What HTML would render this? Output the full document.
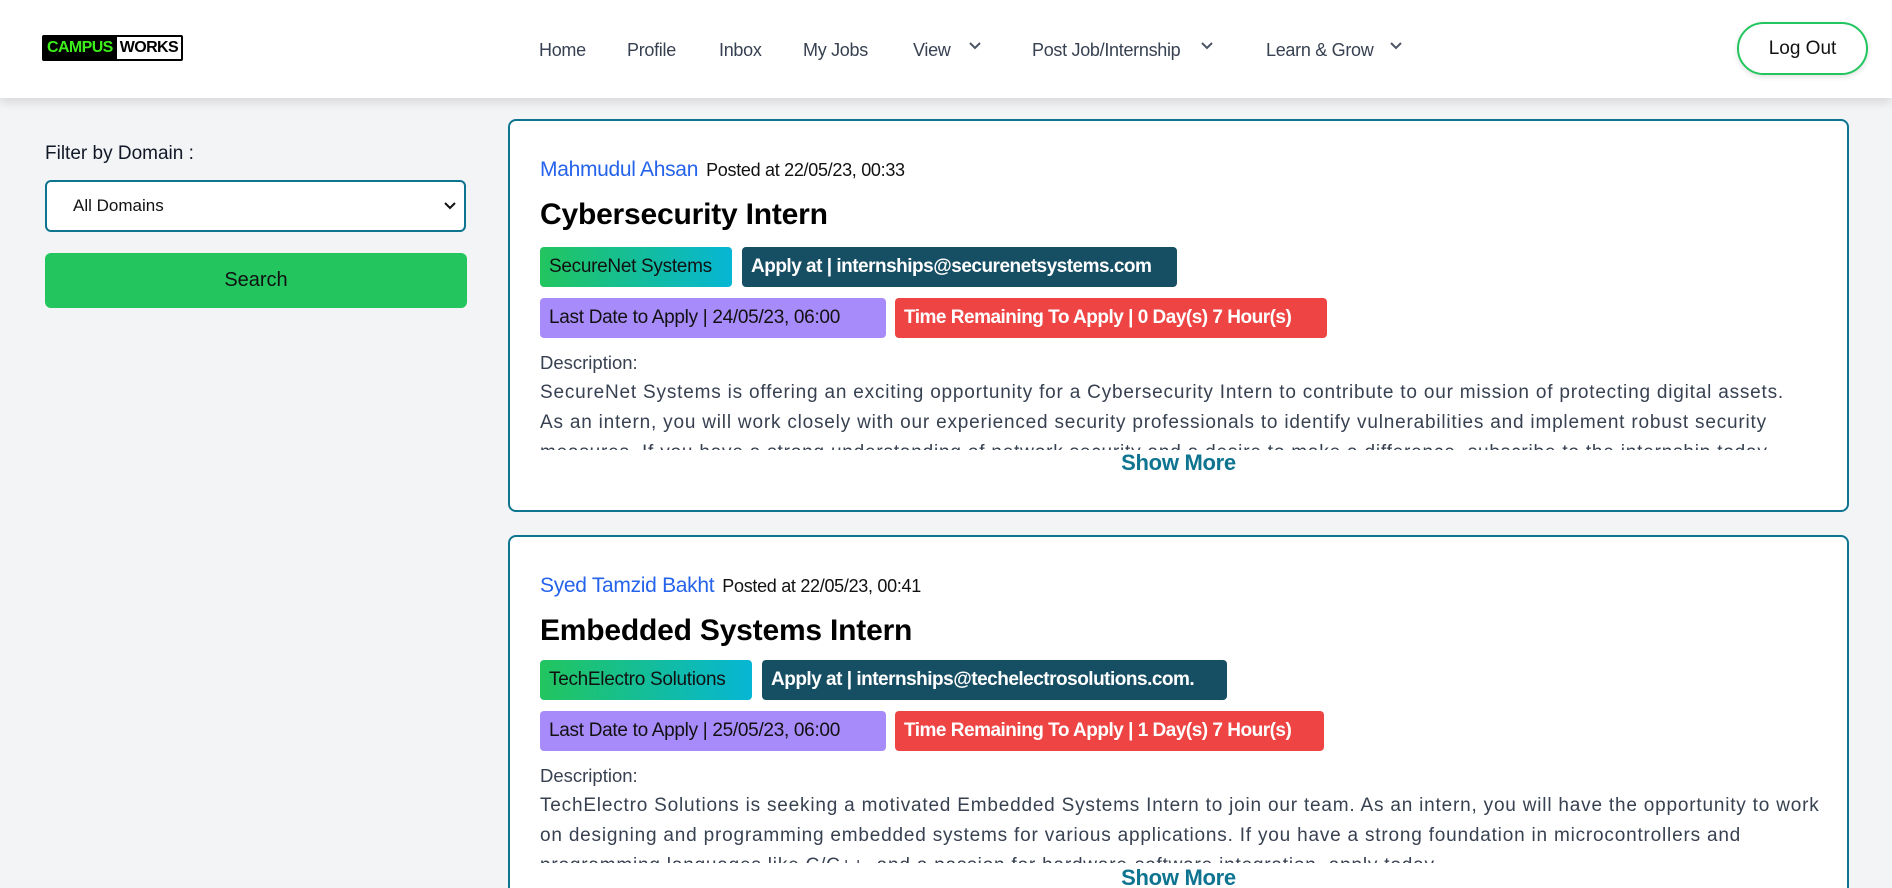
<!DOCTYPE html>
<html><head><meta charset="utf-8"><style>
*{box-sizing:border-box;margin:0;padding:0}
html,body{width:1892px;height:888px;overflow:hidden}
body{background:#f3f4f6;font-family:"Liberation Sans",sans-serif;color:#1f2937}
#w{position:relative;width:1892px;height:888px;overflow:hidden}
.hdr{position:absolute;left:0;top:0;width:1892px;height:98px;background:#fff;box-shadow:0 4px 10px rgba(0,0,0,.12);z-index:2}
.logo{position:absolute;left:42px;top:35px;height:26px;border:2px solid #000;border-radius:2px;display:flex;font-weight:bold;font-size:16px;line-height:22px;letter-spacing:-0.6px}
.logo .a{background:#000;color:#3cf01a;padding:0 4px 0 3px}
.logo .b{background:#fff;color:#000;padding:0 3px}
.nav{position:absolute;top:38px;font-size:18px;color:#374151;line-height:24px;letter-spacing:-0.3px}
.chev{position:absolute;top:41px;width:14px;height:10px}
.logout{position:absolute;left:1737px;top:22px;width:131px;height:53px;border:2px solid #22c55e;border-radius:27px;font-size:19px;text-align:center;line-height:49px;color:#111;box-shadow:0 2px 6px rgba(0,0,0,.12)}
.lbl{position:absolute;left:45px;top:143px;font-size:19px;color:#111827}
.sel{position:absolute;left:45px;top:180px;width:421px;height:52px;background:#fff;border:2px solid #0e7490;border-radius:6px;font-size:17px;line-height:48px;padding-left:26px;color:#111}
.search{position:absolute;left:45px;top:253px;width:422px;height:55px;background:#22c55e;border-radius:6px;font-size:20px;text-align:center;line-height:55px;color:#111}
.card{position:absolute;left:508px;width:1341px;background:#fff;border:2px solid #0e7490;border-radius:8px}
.name{position:absolute;left:30px;top:37px;font-size:21px;color:#2563eb;white-space:nowrap;letter-spacing:-0.3px}
.name span{color:#111;font-size:18px;margin-left:8px}
.title{position:absolute;left:30px;top:77px;font-size:30px;font-weight:bold;color:#000;white-space:nowrap;letter-spacing:-0.2px}
.bd{position:absolute;height:40px;border-radius:4px;font-size:19px;line-height:40px;padding:0 9px;white-space:nowrap;letter-spacing:-0.3px;overflow:hidden}
.g{background:linear-gradient(90deg,#22c55e,#06b6d4);color:#111}
.t{background:#164e63;color:#fff;font-weight:bold;letter-spacing:-0.5px}
.p{background:#a78bfa;color:#111}
.r{background:#ef4444;color:#fff;font-weight:bold;letter-spacing:-0.5px}
.dl{position:absolute;left:30px;font-size:18.5px;color:#374151}
.desc{position:absolute;left:30px;width:1300px;font-size:19px;line-height:30px;color:#374151;overflow:hidden;letter-spacing:0.8px}
.more{position:absolute;left:0;width:100%;text-align:center;font-size:22px;font-weight:bold;color:#0e7490;letter-spacing:-0.3px}
</style></head><body><div id="w">
<div class="hdr">
<div class="logo"><span class="a">CAMPUS</span><span class="b">WORKS</span></div>
<div class="nav" style="left:539px">Home</div>
<div class="nav" style="left:627px">Profile</div>
<div class="nav" style="left:719px">Inbox</div>
<div class="nav" style="left:803px">My Jobs</div>
<div class="nav" style="left:913px">View</div>
<svg class="chev" style="left:968px" viewBox="0 0 14 10"><path d="M2 2l5 5 5-5" stroke="#4b5563" stroke-width="2" fill="none"/></svg>
<div class="nav" style="left:1032px">Post Job/Internship</div>
<svg class="chev" style="left:1200px" viewBox="0 0 14 10"><path d="M2 2l5 5 5-5" stroke="#4b5563" stroke-width="2" fill="none"/></svg>
<div class="nav" style="left:1266px">Learn &amp; Grow</div>
<svg class="chev" style="left:1389px" viewBox="0 0 14 10"><path d="M2 2l5 5 5-5" stroke="#4b5563" stroke-width="2" fill="none"/></svg>
<div class="logout">Log Out</div>
</div>
<div class="lbl">Filter by Domain :</div>
<div class="sel">All Domains<svg style="position:absolute;right:8px;top:20px" width="12" height="8" viewBox="0 0 12 8"><path d="M1 1l5 5 5-5" stroke="#111" stroke-width="2" fill="none"/></svg></div>
<div class="search">Search</div>

<div class="card" style="top:119px;height:393px">
<div class="name">Mahmudul Ahsan<span>Posted at 22/05/23, 00:33</span></div>
<div class="title">Cybersecurity Intern</div>
<div class="bd g" style="left:30px;top:126px;width:192px">SecureNet Systems</div>
<div class="bd t" style="left:232px;top:126px;width:435px">Apply at | internships@securenetsystems.com</div>
<div class="bd p" style="left:30px;top:177px;width:346px">Last Date to Apply | 24/05/23, 06:00</div>
<div class="bd r" style="left:385px;top:177px;width:432px">Time Remaining To Apply | 0 Day(s) 7 Hour(s)</div>
<div class="dl" style="top:231px">Description:</div>
<div class="desc" style="top:257px;height:72px">SecureNet Systems is offering an exciting opportunity for a Cybersecurity Intern to contribute to our mission of protecting digital assets.<br>As an intern, you will work closely with our experienced security professionals to identify vulnerabilities and implement robust security<br>measures. If you have a strong understanding of network security and a desire to make a difference, subscribe to the internship today.</div>
<div class="more" style="top:329px">Show More</div>
</div>

<div class="card" style="top:535px;height:380px">
<div class="name">Syed Tamzid Bakht<span>Posted at 22/05/23, 00:41</span></div>
<div class="title">Embedded Systems Intern</div>
<div class="bd g" style="left:30px;top:123px;width:212px">TechElectro Solutions</div>
<div class="bd t" style="left:252px;top:123px;width:465px">Apply at | internships@techelectrosolutions.com.</div>
<div class="bd p" style="left:30px;top:174px;width:346px">Last Date to Apply | 25/05/23, 06:00</div>
<div class="bd r" style="left:385px;top:174px;width:429px">Time Remaining To Apply | 1 Day(s) 7 Hour(s)</div>
<div class="dl" style="top:228px">Description:</div>
<div class="desc" style="top:254px;height:72px">TechElectro Solutions is seeking a motivated Embedded Systems Intern to join our team. As an intern, you will have the opportunity to work<br>on designing and programming embedded systems for various applications. If you have a strong foundation in microcontrollers and<br>programming languages like C/C++, and a passion for hardware-software integration, apply today.</div>
<div class="more" style="top:328px">Show More</div>
</div>
</div></body></html>
